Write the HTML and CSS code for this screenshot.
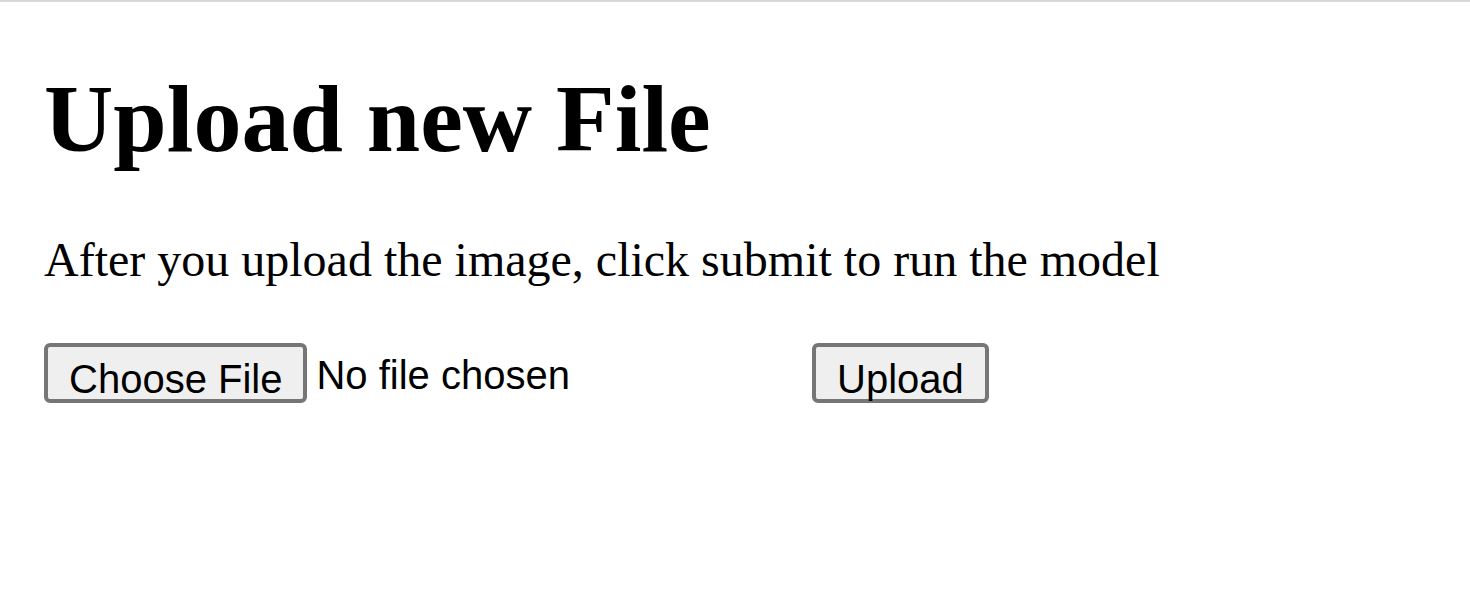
FILE: index.html
```html
<!DOCTYPE html>
<html lang="en">
<head>
    <meta charset="UTF-8">
    <meta name="viewport" content="width=device-width, initial-scale=1.0">
    <title>Upload new File</title>
    <link rel="stylesheet" href="styles.css">
</head>
<body>
    <div class="page">
        <h1>Upload new File</h1>
        <p>After you upload the image, click submit to run the model</p>
        <form class="upload-form" method="post" enctype="multipart/form-data">
            <div class="file-picker">
                <label class="btn" for="file">Choose File</label>
                <span class="file-name">No file chosen</span>
                <input type="file" id="file" name="file" class="file-input">
            </div>
            <button type="submit" class="btn">Upload</button>
        </form>
    </div>
</body>
</html>
```

FILE: styles.css
```css
/* Global */
* {
    box-sizing: border-box;
}

body {
    margin: 0;
    background-color: #ffffff;
    color: #000000;
    font-family: "Liberation Serif", "Times New Roman", serif;
}

/* Page */
.page {
    border-top: 2px solid #d6d9dc;
    padding: 0 44px;
}

h1 {
    font-size: 96px;
    font-weight: bold;
    line-height: 1.15;
    margin: 62px 0 0 0;
}

p {
    font-size: 48px;
    line-height: 1.15;
    margin: 58px 0 0 0;
}

/* Upload form */
.upload-form {
    display: flex;
    align-items: center;
    margin-top: 55px;
}

.file-picker {
    display: flex;
    align-items: center;
    width: 768px;
}

.file-input {
    display: none;
}

.btn {
    display: inline-block;
    font-family: "Liberation Sans", Arial, sans-serif;
    font-size: 40px;
    line-height: 1;
    color: #000000;
    background-color: #efefef;
    border: 4px solid #767676;
    border-radius: 6px;
    padding: 12px 21px 0;
    height: 60px;
    cursor: pointer;
}

.file-name {
    font-family: "Liberation Sans", Arial, sans-serif;
    font-size: 40px;
    line-height: 1;
    margin-left: 9px;
    margin-top: 4px;
}
```
